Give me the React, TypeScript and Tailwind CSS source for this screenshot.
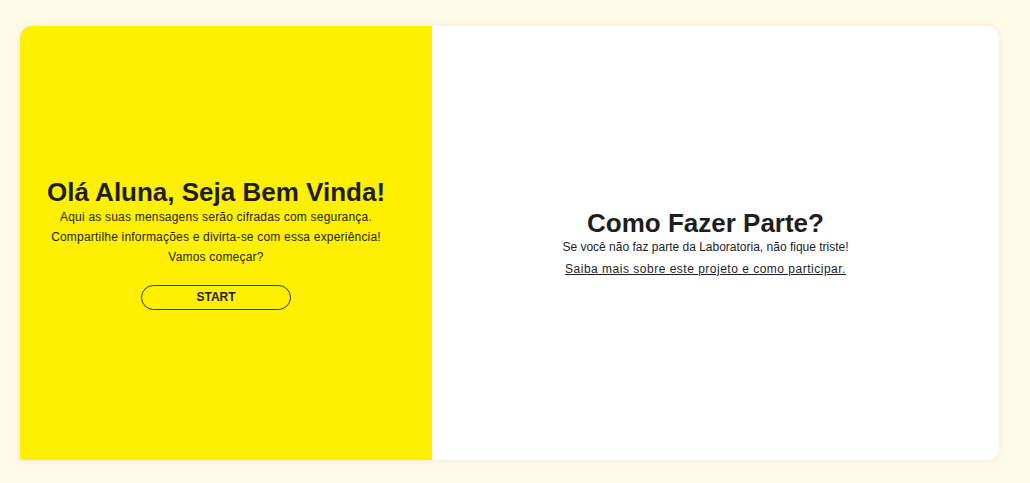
export default function App() {
  return (
    <div
      className="w-[1030px] h-[483px] bg-[#fefaea] pt-[26px] pl-5 pr-[31px] pb-[23px]"
      style={{ fontFamily: '"Liberation Sans", Arial, sans-serif' }}
    >
      <div className="flex h-[434px] w-[979px] rounded-r-[12px] rounded-tl-[12px] bg-white shadow-[0_0_6px_rgba(230,220,180,0.5)] text-[#1e1e1e]">
        <div className="flex w-[412px] flex-col items-center justify-center rounded-tl-[12px] bg-[#ffef00] pr-5 text-center">
          <h1 className="text-[26px] font-bold leading-[30px]">Olá Aluna, Seja Bem Vinda!</h1>
          <p className="text-[12px] leading-[20px] tracking-[0.2px]">Aqui as suas mensagens serão cifradas com segurança.</p>
          <p className="text-[12px] leading-[20px] tracking-[0.2px]">Compartilhe informações e divirta-se com essa experiência!</p>
          <p className="text-[12px] leading-[20px] tracking-[0.2px]">Vamos começar?</p>
          <button className="mt-[18px] h-[25px] w-[150px] rounded-[13px] border border-[#333] text-[12px] font-bold">
            START
          </button>
        </div>
        <div className="flex flex-1 flex-col items-center justify-center pr-5 text-center">
          <h2 className="text-[26px] font-bold leading-[30px]">Como Fazer Parte?</h2>
          <p className="text-[12px] leading-[18px]">Se você não faz parte da Laboratoria, não fique triste!</p>
          <a href="#" className="mt-1 text-[12px] leading-[18px] tracking-[0.5px] underline">
            Saiba mais sobre este projeto e como participar.
          </a>
        </div>
      </div>
    </div>
  );
}
